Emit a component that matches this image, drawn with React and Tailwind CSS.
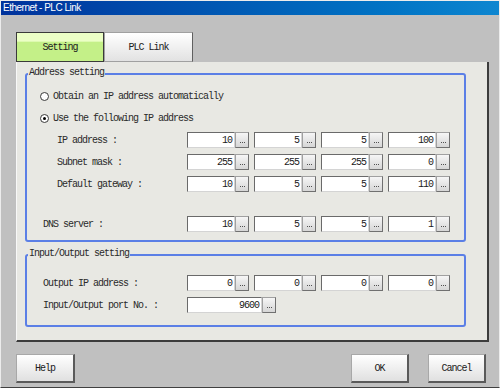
import React from "react";

function Dots() {
  return (
    <div className="w-[14px] h-full bg-linear-to-b from-[#f6f6f6] to-[#d6d6d6] border border-[#a0a0a0] border-r-[#707070] border-b-[#707070] flex items-end justify-center gap-[1px] pb-[4px]">
      <span className="w-[1px] h-[1px] bg-[#505050]" />
      <span className="w-[1px] h-[1px] bg-[#505050]" />
      <span className="w-[1px] h-[1px] bg-[#505050]" />
    </div>
  );
}

function Field({ value, wide }) {
  return (
    <div className="flex h-[16px]">
      <div
        className={`${
          wide ? "w-[75px]" : "w-[48px]"
        } h-full bg-white border border-[#d4d4d4] border-t-[#6a6a6a] border-l-[#6a6a6a] flex items-center justify-end pr-[2px] text-[#1a1a1a]`}
      >
        {value}
      </div>
      <Dots />
    </div>
  );
}

function FieldRow({ label, values, indent }) {
  return (
    <div className="flex items-center h-[22px]">
      <div className={`w-[160px] ${indent ? "pl-[30px]" : "pl-[16px]"}`}>{label}</div>
      <div className="flex gap-[5px]">
        {values.map((v, i) => (
          <Field key={i} value={v} />
        ))}
      </div>
    </div>
  );
}

function Radio({ checked, label }) {
  return (
    <div className="flex items-center h-[22px] pl-[13px] gap-[4px]">
      <span className="w-[9px] h-[9px] rounded-full bg-white border border-[#3a3a3a] flex items-center justify-center">
        {checked && <span className="w-[3px] h-[3px] rounded-full bg-black" />}
      </span>
      <span>{label}</span>
    </div>
  );
}

function Group({ title, className, children }) {
  return (
    <div className={`relative border-2 border-[#5b7fe6] rounded-[3px] ${className}`}>
      <span className="absolute left-[1px] top-[-8px] px-[1px] leading-[12px] bg-[#e8e8e3]">
        {title}
      </span>
      {children}
    </div>
  );
}

function Button({ children, className }) {
  return (
    <button
      className={`h-[29px] bg-linear-to-b from-white to-[#e0e0e0] border border-[#a8a8a8] border-r-2 border-b-2 border-r-[#5a5a5a] border-b-[#5a5a5a] text-[#202020] ${className}`}
    >
      {children}
    </button>
  );
}

export default function App() {
  return (
    <div className="w-[500px] h-[388px] bg-[#c0c0c0] border border-[#ececec] border-b-[#404040] flex flex-col font-['Liberation_Mono',monospace] text-[10px] tracking-[-1px] text-[#2a2a2a] overflow-hidden">
      <div className="h-[14px] bg-linear-to-r from-[#00329c] to-[#0e86d0] text-white font-['Liberation_Sans',sans-serif] text-[10px] tracking-[-0.5px] leading-[14px] pl-[2px]">
        Ethernet - PLC Link
      </div>

      <div className="flex flex-col pl-[15px] pr-[10px] pt-[17px]">
        <div className="flex h-[30px]">
          <div className="w-[88px] h-full border border-[#3a3a3a] bg-linear-to-b from-[#ecffc6] from-30% to-[#c4f088] to-31% flex items-center justify-center text-[#202020]">
            Setting
          </div>
          <div className="w-[89px] h-full border border-[#a0a0a0] border-r-[#606060] bg-linear-to-b from-white to-[#e2e2e2] flex items-center justify-center text-[#202020]">
            PLC Link
          </div>
        </div>

        <div className="h-[280px] bg-[#e8e8e3] border-l border-l-[#f8f8f8] border-r-2 border-b-2 border-r-[#3c3c3c] border-b-[#3c3c3c] pt-[11px] pl-[8px] pr-[21px] flex flex-col">
          <Group title="Address setting" className="pt-[10px] pb-[5px]">
            <Radio label="Obtain an IP address automatically" />
            <Radio checked label="Use the following IP address" />
            <FieldRow indent label="IP address :" values={["10", "5", "5", "100"]} />
            <FieldRow indent label="Subnet mask :" values={["255", "255", "255", "0"]} />
            <FieldRow indent label="Default gateway :" values={["10", "5", "5", "110"]} />
            <div className="h-[18px]" />
            <FieldRow label="DNS server :" values={["10", "5", "5", "1"]} />
          </Group>

          <Group title="Input/Output setting" className="mt-[12px] pt-[16px] pb-[9px]">
            <FieldRow label="Output IP address :" values={["0", "0", "0", "0"]} />
            <div className="flex items-center h-[22px]">
              <div className="w-[160px] pl-[16px]">Input/Output port No. :</div>
              <Field wide value="9600" />
            </div>
          </Group>
        </div>

        <div className="flex mt-[12px] pr-[3px]">
          <Button className="w-[59px]">Help</Button>
          <Button className="w-[58px] ml-auto">OK</Button>
          <Button className="w-[58px] ml-[19px]">Cancel</Button>
        </div>
      </div>
    </div>
  );
}
